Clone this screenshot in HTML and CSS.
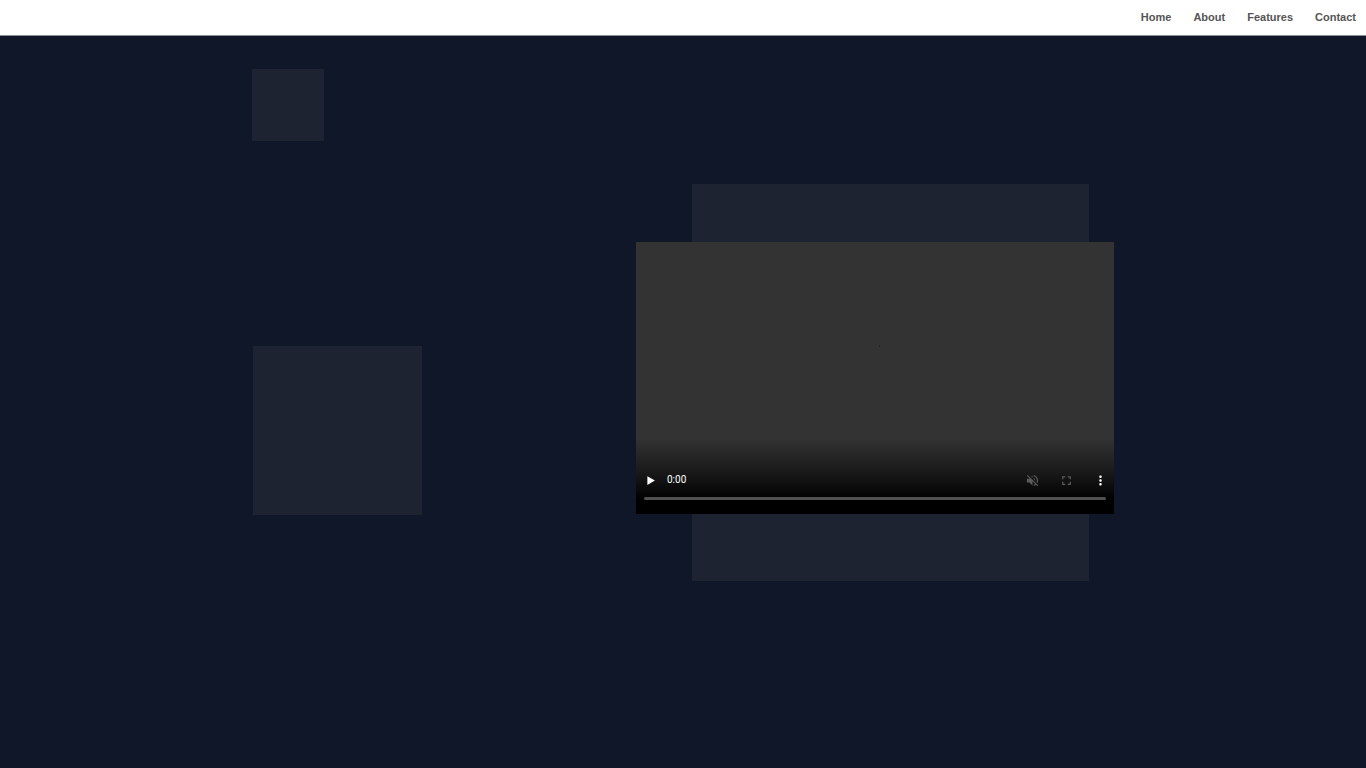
FILE: index.html
```html
<!DOCTYPE html>
<html lang="en">
<head>
<meta charset="utf-8">
<meta name="viewport" content="width=device-width, initial-scale=1">
<title>Home</title>
<link rel="stylesheet" href="styles.css">
</head>
<body>
<header class="site-header">
  <nav class="nav" aria-label="Main">
    <a href="#home">Home</a>
    <a href="#about">About</a>
    <a href="#features">Features</a>
    <a href="#contact">Contact</a>
  </nav>
</header>
<main class="stage">
  <div class="square square-small"></div>
  <div class="square square-medium"></div>
  <div class="square square-large"></div>
  <section class="player" aria-label="Video player">
    <div class="picture"><span class="speck"></span></div>
    <div class="controls">
      <div class="buttons">
        <button type="button" class="control" aria-label="Play">
          <svg viewBox="0 0 24 24"><path d="M7 5v14l12-7z"/></svg>
        </button>
        <span class="time">0:00</span>
        <button type="button" class="control" aria-label="Unmute" disabled>
          <svg viewBox="0 0 24 24"><path d="M16.5 12c0-1.77-1.02-3.29-2.5-4.03v2.21l2.45 2.45c.03-.2.05-.41.05-.63zm2.5 0c0 .94-.2 1.82-.54 2.64l1.51 1.51C20.63 14.91 21 13.5 21 12c0-4.28-2.99-7.86-7-8.77v2.06c2.89.86 5 3.54 5 6.71zM4.27 3 3 4.27 7.73 9H3v6h4l5 5v-6.73l4.25 4.25c-.67.52-1.42.93-2.25 1.18v2.06c1.38-.31 2.63-.95 3.69-1.81L19.73 21 21 19.73l-9-9L4.27 3zM12 4 9.91 6.09 12 8.18V4z"/></svg>
        </button>
        <button type="button" class="control" aria-label="Full screen" disabled>
          <svg viewBox="0 0 24 24"><path d="M7 14H5v5h5v-2H7v-3zm-2-4h2V7h3V5H5v5zm12 7h-3v2h5v-5h-2v3zM14 5v2h3v3h2V5h-5z"/></svg>
        </button>
        <button type="button" class="control" aria-label="More options">
          <svg viewBox="0 0 24 24"><path d="M12 8c1.1 0 2-.9 2-2s-.9-2-2-2-2 .9-2 2 .9 2 2 2zm0 2c-1.1 0-2 .9-2 2s.9 2 2 2 2-.9 2-2-.9-2-2-2zm0 6c-1.1 0-2 .9-2 2s.9 2 2 2 2-.9 2-2-.9-2-2-2z"/></svg>
        </button>
      </div>
      <input class="timeline" type="range" min="0" max="100" value="0" aria-label="Playback position">
    </div>
  </section>
</main>
</body>
</html>
```

FILE: styles.css
```css
* {
  box-sizing: border-box;
}

body {
  display: flex;
  flex-direction: column;
  min-height: 100vh;
  margin: 0;
  background: #101728;
  font-family: "Liberation Sans", Arial, sans-serif;
}

.site-header {
  padding: 11px 10px;
  border-bottom: 1px solid #8b8d93;
  background: #fff;
}

.nav {
  display: flex;
  justify-content: flex-end;
  gap: 22px;
  font-size: 11px;
  font-weight: bold;
  line-height: 13px;
}

.nav a {
  color: #555;
  text-decoration: none;
}

.stage {
  position: relative;
  flex: 1;
  padding-top: 206px;
  overflow: hidden;
}

/* Decorative squares floating behind the player */
.square {
  position: absolute;
  aspect-ratio: 1;
  background: #1d2331;
}

.square-small {
  left: 252px;
  top: 33px;
  width: 72px;
}

.square-medium {
  left: 253px;
  top: 310px;
  width: 169px;
}

.square-large {
  left: 692px;
  top: 148px;
  width: 397px;
}

.player {
  position: relative;
  display: flex;
  flex-direction: column;
  width: 35%;
  margin-left: 46.56%;
  aspect-ratio: 478 / 272;
  background: linear-gradient(to top, #000 14px, rgba(0, 0, 0, 0.5) 42px, transparent 76px), #333;
}

.picture {
  flex: 1;
  display: grid;
  place-items: center;
  padding: 0 0 16px 8px;
}

.speck {
  width: 1px;
  height: 2px;
  background: #222;
}

.controls {
  padding: 0 8px 14px;
}

.buttons {
  display: flex;
  align-items: center;
  margin: 0 -11px;
}

.control {
  display: grid;
  place-items: center;
  width: 34px;
  height: 28px;
  padding: 0;
  border: 0;
  background: none;
  color: #fff;
}

.control:disabled {
  color: #5a5a5a;
}

.control svg {
  width: 15px;
  height: 15px;
  fill: currentColor;
}

.time {
  flex: 1;
  color: #fff;
  font-family: Roboto, sans-serif;
  font-size: 10px;
  line-height: 12px;
}

.timeline {
  display: block;
  width: 100%;
  height: 3px;
  margin: 3px 0 0;
  border-radius: 2px;
  background: #505050;
  appearance: none;
}

.timeline::-webkit-slider-thumb {
  width: 0;
  height: 0;
  appearance: none;
}
```
